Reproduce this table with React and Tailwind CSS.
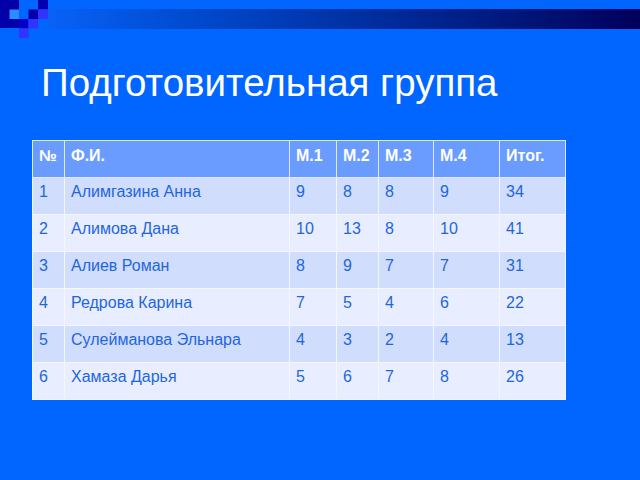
import React from 'react';

const rows = [
  ['1', 'Алимгазина Анна', '9', '8', '8', '9', '34'],
  ['2', 'Алимова Дана', '10', '13', '8', '10', '41'],
  ['3', 'Алиев Роман', '8', '9', '7', '7', '31'],
  ['4', 'Редрова Карина', '7', '5', '4', '6', '22'],
  ['5', 'Сулейманова Эльнара', '4', '3', '2', '4', '13'],
  ['6', 'Хамаза Дарья', '5', '6', '7', '8', '26'],
];

const headers = ['№', 'Ф.И.', 'М.1', 'М.2', 'М.3', 'М.4', 'Итог.'];
const widths = ['w-[32px]', 'w-[225px]', 'w-[47px]', 'w-[42px]', 'w-[55px]', 'w-[66px]', 'w-[66px]'];

function Squares() {
  return (
    <svg width="48" height="38" viewBox="0 0 48 38" className="shrink-0">
      <rect x="0" y="0" width="19" height="28" fill="#0000a8" />
      <rect x="9.5" y="9.5" width="9.5" height="9.5" fill="#2b8cff" />
      <rect x="19" y="19" width="9.5" height="9.5" fill="#0000c8" />
      <rect x="28.5" y="9.5" width="9.5" height="9.5" fill="#0000a8" />
      <rect x="38" y="0" width="10" height="9.5" fill="#0000b0" />
      <rect x="38" y="9.5" width="10" height="9.5" fill="#3333ff" />
      <rect x="28.5" y="19" width="9.5" height="9.5" fill="#3333ff" />
      <rect x="19" y="28.5" width="9.5" height="9.5" fill="#3333ff" />
    </svg>
  );
}

export default function App() {
  return (
    <div className="w-[640px] h-[480px] bg-[#0066ff] overflow-hidden font-['Liberation_Sans',Arial,sans-serif]">
      {/* top decoration */}
      <div className="flex items-start">
        <Squares />
        <div className="mt-[9px] h-[20px] flex-1 bg-gradient-to-r from-[#0962f6] to-[#00005c]" />
      </div>

      <h1 className="pl-[41px] mt-[22px] text-[38.5px] leading-[46px] text-white">
        Подготовительная группа
      </h1>

      <table className="ml-[32px] mt-[34px] border-collapse border border-[#a9c6ff] text-[16px] leading-[18px] table-fixed">
        <thead>
          <tr className="bg-[#6a9bff] h-[37px]">
            {headers.map((h, i) => (
              <th
                key={h}
                className={`${widths[i]} border border-[#dfe9ff] px-[6px] pt-[6px] align-top text-left font-bold text-white`}
              >
                {h}
              </th>
            ))}
          </tr>
        </thead>
        <tbody>
          {rows.map((r, ri) => (
            <tr key={r[0]} className={`h-[37px] ${ri % 2 === 0 ? 'bg-[#d0ddfd]' : 'bg-[#e8eeff]'}`}>
              {r.map((c, ci) => (
                <td
                  key={ci}
                  className="border border-[#f4f7ff] px-[6px] pt-[5px] align-top text-[#1f66dc]"
                >
                  {c}
                </td>
              ))}
            </tr>
          ))}
        </tbody>
      </table>
    </div>
  );
}
